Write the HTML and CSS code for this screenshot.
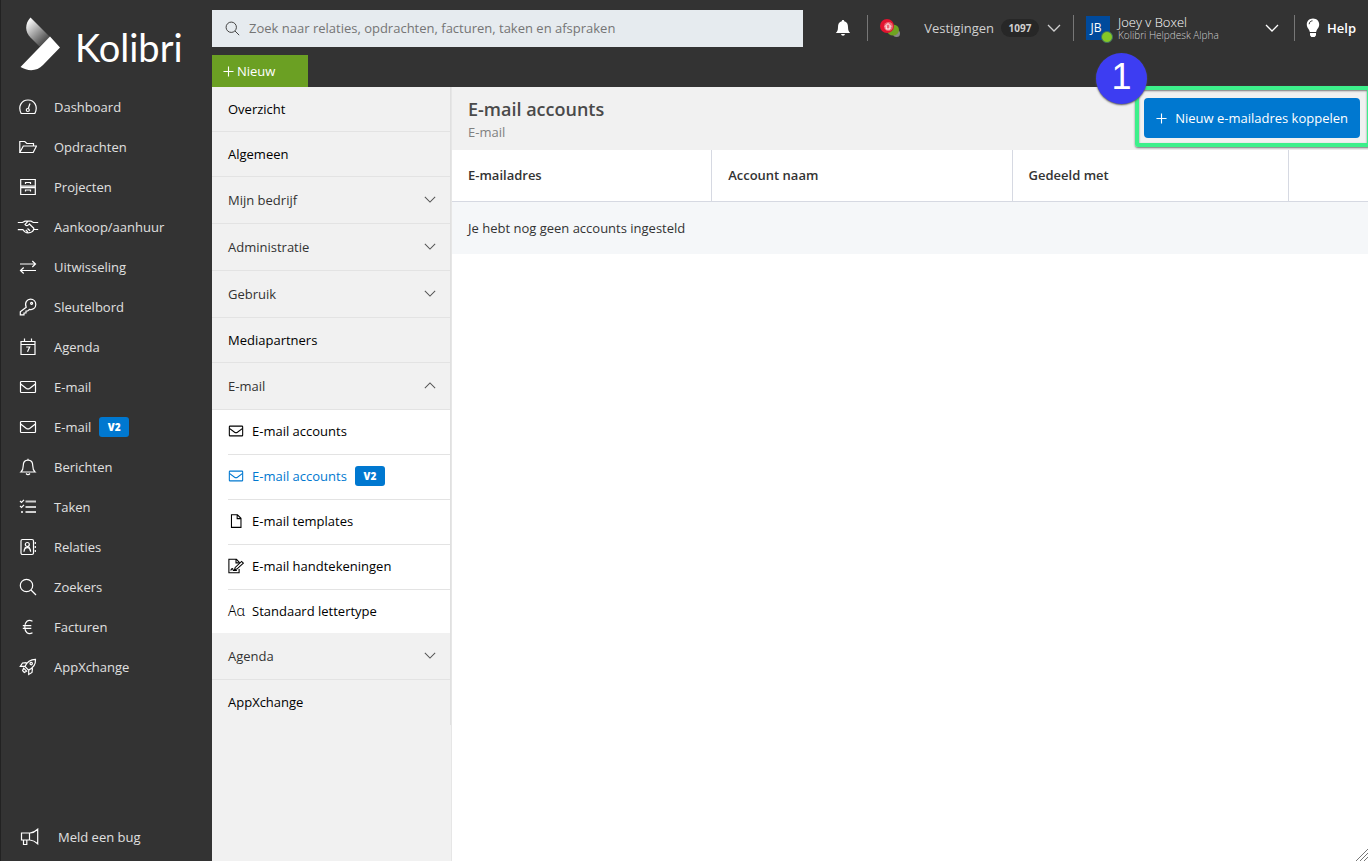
FILE: index.html
```html
<!DOCTYPE html>
<html lang="nl">
<head>
<meta charset="utf-8">
<meta name="viewport" content="width=device-width, initial-scale=1">
<title>Kolibri - E-mail accounts</title>
<link rel="stylesheet" href="styles.css">
</head>
<body>
<svg class="sprite" aria-hidden="true">
  <symbol id="i-mail" viewBox="0 0 18 18"><rect x="1.500" y="3.500" width="15" height="11" rx=".8"/><path d="M1.600 6l5.800 4.400q1.600 1.100 3.200 0L16.400 6"/></symbol>
  <symbol id="i-down" viewBox="0 0 14 8"><path d="M1 1l6 6 6-6"/></symbol>
  <symbol id="i-up" viewBox="0 0 14 8"><path d="M1 7l6-6 6 6"/></symbol>
  <symbol id="i-search" viewBox="0 0 18 18"><circle cx="7.500" cy="7.500" r="6.200"/><path d="M12 12l5 5"/></symbol>
  <symbol id="i-plus" viewBox="0 0 12 12"><path d="M6 .5v11M.5 6h11"/></symbol>
</svg>
<div class="app">
  <aside class="sidebar">
    <a class="brand" href="#">
      <svg class="brand-mark" viewBox="0 0 40 54" aria-hidden="true">
        <defs>
          <linearGradient id="wing" x1="0.100" y1="0" x2="0.800" y2="0.900">
            <stop offset="0.050" stop-color="#fff"/>
            <stop offset="0.900" stop-color="#555"/>
          </linearGradient>
        </defs>
        <path d="M10.500 .5L30 20 19.500 29.500 10.500 20.500C5 15 4.500 7 10.500 .5z" fill="url(#wing)"/>
        <path d="M30 19.500L40 30.500 23 48C17 54.500 8 54.500 .5 50z" fill="#fff"/>
      </svg>
      <span class="brand-name">Kolibri</span>
    </a>
    <nav class="menu" aria-label="Hoofdmenu">
      <a href="#"><svg class="icon" viewBox="0 0 18 18"><path d="M2.200 15.500C-1.400 8.500 2.500 2 9 2s10.400 6.500 6.800 13.500z"/><circle cx="8.800" cy="12" r="1.500"/><path d="M9.300 10.500L11 5.500"/></svg>Dashboard</a>
      <a href="#"><svg class="icon" viewBox="0 0 18 18"><path d="M.8 14.500v-11h5l2 2h6.700V8M.8 14.500L4.300 8h13.200l-3.300 6.500z"/></svg>Opdrachten</a>
      <a href="#"><svg class="icon" viewBox="0 0 18 18"><path d="M1.700 1.500h14.600v15H1.700zM1.700 8.200h14.600M1.700 9.700h14.600M6.500 6V4.500h5V6M6.500 13.500V12h5v1.500"/></svg>Projecten</a>
      <a href="#"><svg class="icon icon-wide" viewBox="0 0 22 18"><path d="M.8 4.500h4.700L8 3.200h3L8 6.500c1 1.800 3 1.200 4.300-.5l4.500 4.300c-.2 3-2.800 4.600-5.800 4.600-2 0-4-1.600-5-3.200H.8M11 3.200h3l2.300 1.300h4.900M16.800 11.500h4.400M10.500 10.500l2.500 2.300M8.800 12l2 2"/></svg>Aankoop/aanhuur</a>
      <a href="#"><svg class="icon" viewBox="0 0 18 18"><path d="M1 6h15.500M13.300 3l3.200 3-3.200 3M17 12.500H1.500M4.700 9.500l-3.200 3 3.200 3"/></svg>Uitwisseling</a>
      <a href="#"><svg class="icon" viewBox="0 0 18 18"><path d="M7.200 9.300C5.200 4.500 8.300 1.200 11.500 1.200c3.500 0 5.300 2.600 5.300 5.300 0 3.600-3 5.700-6.300 4.800L8.700 13H7v2H5v1.800H1.300v-2.900z"/><circle cx="12.600" cy="5.300" r="1"/></svg>Sleutelbord</a>
      <a href="#"><svg class="icon" viewBox="0 0 18 18"><path d="M2 3.500h14v13H2zM2 6.500h14M5.500 3.500v-3M12.500 3.500v-3M7.200 9h3.500L8.500 13.800"/></svg>Agenda</a>
      <a href="#"><svg class="icon"><use href="#i-mail"/></svg>E-mail</a>
      <a href="#"><svg class="icon"><use href="#i-mail"/></svg>E-mail <span class="tag">V2</span></a>
      <a href="#"><svg class="icon" viewBox="0 0 18 18"><path d="M9 2.200V.8M2 14c1.700-1.500 2.200-3 2.200-6C4.200 4.500 6 2.200 9 2.200S13.800 4.500 13.800 8c0 3 .5 4.500 2.200 6zM7 15.500q2 2.200 4 0"/></svg>Berichten</a>
      <a href="#"><svg class="icon" viewBox="0 0 18 18"><path d="M1 3l1.500 1.500L5 1.800M1 8l1.500 1.500L5 6.800"/><path class="bars" d="M6.500 3.500H17M6.500 9H17M6.500 14H17M2 14h2"/></svg>Taken</a>
      <a href="#"><svg class="icon" viewBox="0 0 18 18"><rect x="2" y="1.500" width="12.500" height="15" rx="1.500"/><circle cx="8.300" cy="6.500" r="2"/><path d="M5 13.800c0-5.500 6.600-5.500 6.600 0M6.500 9l-1.500 4M10 9l1.500 4M16.300 4v2M16.300 8v2M16.300 12v2"/></svg>Relaties</a>
      <a href="#"><svg class="icon"><use href="#i-search"/></svg>Zoekers</a>
      <a href="#"><svg class="icon" viewBox="0 0 18 18"><path d="M13.500 3.300C9 .8 5.800 4 5.800 9s3.200 8.200 7.700 5.700M3.800 7.700h8.500M3.800 10.300h8.500"/></svg>Facturen</a>
      <a href="#"><svg class="icon" viewBox="0 0 18 18"><path d="M16.500 1.300c.3 5-1.800 8.500-7 10.800L6 8.500C8 3.500 11.500 1.300 16.500 1.300zM6 8.300H1.300L3.500 5l4-.3M9.700 12v4.500l3.300-2 .5-4.200M4.600 10.200l3 3-2.300 1.200-1.700-1.700z"/><circle cx="12.200" cy="5.600" r="1.200"/></svg>AppXchange</a>
    </nav>
    <a class="report" href="#"><svg class="icon icon-report" viewBox="0 0 20 18"><path d="M2.500 5H11c3-.3 5.500-1.700 7.700-3.800v14.600c-2.200-2-4.700-3.500-7.700-3.800H2.500zM10.500 5v7M4.500 12v4.500h3.300V12"/></svg>Meld een bug</a>
  </aside>

  <div class="workspace">
    <header class="topbar">
      <div class="topbar-row">
        <label class="search">
          <svg class="search-icon" aria-hidden="true"><use href="#i-search"/></svg>
          <input type="search" aria-label="Zoeken" placeholder="Zoek naar relaties, opdrachten, facturen, taken en afspraken">
        </label>
        <div class="tools">
          <button class="tool bell" type="button" aria-label="Meldingen"><svg width="16" height="18" viewBox="0 0 16 18"><path fill="#fff" d="M8 1c.8 0 1.200.5 1.200 1.200C12 3 13 5 13 8c0 3.500.8 4.600 2.200 6H.8C2.200 12.600 3 11.500 3 8c0-3 1-5 3.800-5.800C6.800 1.500 7.200 1 8 1zM6 15h4q-.3 1.800-2 1.800T6 15z"/></svg></button>
          <button class="tool office" type="button">
            <svg class="office-logo" width="20" height="18" viewBox="0 0 20 18" aria-hidden="true"><circle cx="16.500" cy="14.500" r="3.500" fill="#888"/><ellipse cx="13" cy="11" rx="6" ry="5.500" fill="#6fa321"/><circle cx="7" cy="7" r="7" fill="#e2132f"/><circle cx="8.500" cy="7.500" r="4.500" fill="#ed6875"/><path d="M5 7.500L8 4.500l3 3M6.200 7v3h3.800V7" fill="none" stroke="#fff"/></svg>
            <span>Vestigingen</span><span class="count">1097</span>
            <svg class="chevron"><use href="#i-down"/></svg>
          </button>
          <button class="tool user" type="button">
            <span class="avatar">JB<span class="online"></span></span>
            <span class="who"><span class="name">Joey v Boxel</span><span class="org">Kolibri Helpdesk Alpha</span></span>
            <svg class="chevron"><use href="#i-down"/></svg>
          </button>
          <button class="tool help" type="button"><svg width="14" height="20" viewBox="0 0 14 20" aria-hidden="true"><path fill="#fff" d="M7 .5c4 0 6.200 2.800 6.200 6 0 3.500-2.700 4.700-3 7.500H3.800C3.500 11.200.8 10 .8 6.500c0-3.200 2.200-6 6.200-6zM4 15h6v2.200L8.700 19H5.300L4 17.200z"/><path d="M3.200 6.200C3.300 4 4.600 3 6.500 2.800" fill="none" stroke="#333"/></svg>Help</button>
        </div>
      </div>
      <button class="new-button" type="button"><svg class="plus"><use href="#i-plus"/></svg>Nieuw</button>
    </header>

    <div class="content">
      <aside class="settings">
        <nav class="settings-nav" aria-label="Instellingen">
          <a class="row" href="#">Overzicht</a>
          <a class="row" href="#">Algemeen</a>
          <button class="row group" type="button">Mijn bedrijf<svg class="caret"><use href="#i-down"/></svg></button>
          <button class="row group" type="button">Administratie<svg class="caret"><use href="#i-down"/></svg></button>
          <button class="row group" type="button">Gebruik<svg class="caret"><use href="#i-down"/></svg></button>
          <a class="row" href="#">Mediapartners</a>
          <button class="row group" type="button" aria-expanded="true">E-mail<svg class="caret"><use href="#i-up"/></svg></button>
          <div class="subnav">
            <a href="#"><svg class="sub-icon"><use href="#i-mail"/></svg>E-mail accounts</a>
            <a class="active" href="#" aria-current="page"><svg class="sub-icon"><use href="#i-mail"/></svg>E-mail accounts <span class="tag">V2</span></a>
            <a href="#"><svg class="sub-icon" viewBox="0 0 18 18"><path d="M3.900 2h6.700l4 4v10.200H3.900zM10.300 2v4.300h4.300"/></svg>E-mail templates</a>
            <a href="#"><svg class="sub-icon" viewBox="0 0 18 18"><path d="M12.500 12.500v4H1v-15h8.500l3.500 3.700M9 1.500v4h3M17.300 5.800L10 12.500l-2.700.8.800-2.700 7.200-6.800zM3 14c1.500-3 2.300-2.500 3 0h4"/></svg>E-mail handtekeningen</a>
            <a href="#"><span class="letters" aria-hidden="true">Aɑ</span>Standaard lettertype</a>
          </div>
          <button class="row group" type="button">Agenda<svg class="caret"><use href="#i-down"/></svg></button>
          <a class="row last" href="#">AppXchange</a>
        </nav>
      </aside>

      <main class="page">
        <div class="page-head">
          <div>
            <h1>E-mail accounts</h1>
            <p>E-mail</p>
          </div>
          <div class="callout">
            <button class="primary" type="button"><svg class="plus"><use href="#i-plus"/></svg>Nieuw e-mailadres koppelen</button>
            <span class="callout-frame"></span>
            <span class="callout-step">1</span>
          </div>
        </div>
        <table class="accounts">
          <thead>
            <tr><th class="col-mail" scope="col">E-mailadres</th><th class="col-name" scope="col">Account naam</th><th class="col-shared" scope="col">Gedeeld met</th><th aria-label="Acties"></th></tr>
          </thead>
          <tbody>
            <tr><td colspan="4">Je hebt nog geen accounts ingesteld</td></tr>
          </tbody>
        </table>
        <svg class="grip" viewBox="0 0 12 12" aria-hidden="true"><path d="M0 12L12 0M4 12l8-8M8 12l4-4"/></svg>
      </main>
    </div>
  </div>
</div>
</body>
</html>
```
FILE: styles.css
```css
* { box-sizing: border-box; }

body {
  margin: 0;
  font: 13px/18px "Open Sans", "Noto Sans", sans-serif;
  color: #333;
  background: #fff;
}

a { color: inherit; text-decoration: none; }

button {
  font: inherit;
  color: inherit;
  border: 0;
  padding: 0;
  background: none;
  cursor: pointer;
}

svg { flex: none; fill: none; stroke: currentColor; stroke-width: 1.2; }
svg [fill] { stroke-width: 0; }
svg [stroke] { stroke-width: 1; }
.sprite { position: absolute; width: 0; height: 0; }

.app {
  display: grid;
  grid-template-columns: 212px minmax(0, 1fr);
  min-height: 100vh;
  overflow-x: clip;
}

/* Sidebar */
.sidebar {
  display: flex;
  flex-direction: column;
  background: #333;
  border-left: 1px solid #222;
  color: #e0e0e0;
}

.brand {
  display: flex;
  gap: 15px;
  height: 87px;
  padding: 17px 0 0 19px;
  color: #fff;
}

.brand-mark { width: 40px; height: 54px; }
.brand-name { font: 38px/60px Lato, "Open Sans", sans-serif; }

.menu { display: flex; flex-direction: column; flex: 1; }

.menu a,
.report {
  display: flex;
  align-items: center;
  height: 40px;
  padding-left: 18px;
}

.icon { width: 18px; height: 18px; margin-right: 17px; color: #fff; }
.icon-wide { width: 22px; margin: 0 15px 0 -2px; }
.icon-report { width: 20px; margin-right: 19px; }
.bars { stroke-width: 2; stroke: #d0d0d0; }

.report { margin-bottom: 4px; }

.tag {
  margin-left: 8px;
  width: 30px;
  border-radius: 3px;
  background: #0078d0;
  color: #fff;
  font-size: 10px;
  font-weight: 800;
  line-height: 20px;
  text-align: center;
}

/* Top bar */
.workspace { display: flex; flex-direction: column; min-width: 0; }

.topbar {
  height: 87px;
  padding-top: 10px;
  background: #333;
  color: #fff;
}

.topbar-row { display: flex; height: 37px; margin-bottom: 8px; }

.search {
  display: flex;
  align-items: center;
  flex: 1;
  min-width: 0;
  gap: 9px;
  padding: 0 0 1px 13px;
  background: #e6ebef;
}

.search-icon { width: 15px; height: 15px; color: #444; }

.search input {
  flex: 1;
  min-width: 0;
  border: 0;
  padding: 0;
  outline: 0;
  background: none;
  font: inherit;
}

.search input::placeholder { color: #757575; opacity: 1; }

.tools { display: flex; align-items: center; padding: 0 12px 1px 32px; }
.tool { display: flex; align-items: center; height: 26px; }
.tool + .tool { border-left: 1px solid #777; }

.bell { padding-right: 16px; }
.office { padding: 0 12px; color: #d0d0d0; }
.office-logo { margin-right: 24px; }

.count {
  margin: 0 8px 0 7px;
  width: 38px;
  border-radius: 9px;
  background: #272727;
  font-size: 10px;
  font-weight: 700;
  text-align: center;
}

.chevron { width: 14px; height: 8px; stroke-width: 1.3; }

.user { padding: 0 15px 0 12px; }

.avatar {
  position: relative;
  width: 24px;
  margin-right: 8px;
  padding-right: 4px;
  background: #004a9c;
  font-size: 12px;
  line-height: 24px;
}

.online {
  position: absolute;
  right: -3px;
  bottom: -3px;
  width: 12px;
  height: 12px;
  border: 1px solid #3f6f63;
  border-radius: 50%;
  background: #84c827;
}

.who { display: grid; width: 147px; text-align: left; font-weight: 300; }
.name { line-height: 14px; }
.org { font-size: 10px; line-height: 12px; color: #d0d0d0; }

.help { padding-left: 11px; gap: 7px; font-weight: 600; }

.new-button {
  display: flex;
  align-items: center;
  gap: 3px;
  width: 96px;
  height: 32px;
  padding-left: 11px;
  background: #6ba023;
}

.plus { width: 11px; height: 11px; }

/* Settings navigation */
.content { display: flex; flex: 1; }

.settings {
  flex: none;
  width: 240px;
  border-right: 1px solid #e6e6e6;
  background: #f1f1f1;
}

.settings-nav { display: flex; flex-direction: column; border-right: 1px solid #e0e0e0; }

.row {
  display: flex;
  align-items: center;
  height: 45px;
  padding: 0 14px 0 16px;
  border-bottom: 1px solid #e3e3e3;
  color: #000;
}

.row.group { justify-content: space-between; height: 47px; padding-bottom: 1px; color: #333; }
.row.last { border-bottom: 0; padding-bottom: 2px; }
.caret { width: 12px; height: 7px; color: #555; }

.subnav { padding-left: 16px; background: #fff; }

.subnav a {
  display: flex;
  align-items: center;
  height: 45px;
  padding-bottom: 2px;
  border-bottom: 1px solid #e3e3e3;
  color: #000;
}

.subnav a:last-child { height: 43px; border-bottom: 0; }
.subnav .active { color: #0078d0; }
.sub-icon { width: 16px; height: 16px; margin-right: 8px; }
.letters { width: 24px; font-family: "Noto Sans", sans-serif; font-size: 14px; font-weight: 300; }

/* Page */
.page { position: relative; flex: 1; min-width: 0; }

.page-head {
  display: flex;
  align-items: flex-start;
  justify-content: space-between;
  height: 63px;
  padding: 11px 8px 0 16px;
  background: #f1f1f1;
}

.page-head h1 { margin: 0; font-size: 18px; font-weight: 600; line-height: 22px; color: #4a4a4a; }
.page-head p { margin: 3px 0 0; color: #808080; }

.callout { position: relative; }

.primary {
  display: flex;
  align-items: center;
  gap: 8px;
  height: 40px;
  padding: 0 12px;
  border-radius: 4px;
  background: #0078d0;
  color: #fff;
}

.callout-frame {
  position: absolute;
  inset: -12px -11px -9px -9px;
  border: 4px solid #3df08b;
  border-radius: 3px;
  box-shadow: 0 1px 2px #777, inset 0 1px 2px #777;
  pointer-events: none;
}

.callout-step {
  position: absolute;
  top: -45px;
  left: -48px;
  width: 51px;
  height: 51px;
  border-radius: 50%;
  background: #3d3df2;
  box-shadow: 0 1px 2px #555;
  color: #fff;
  font: 36px/48px "Liberation Sans", Arial, sans-serif;
  text-align: center;
}

.accounts { width: 100%; border-collapse: separate; border-spacing: 0; table-layout: fixed; }

.accounts th,
.accounts td { height: 52px; padding: 0 16px; text-align: left; }

.accounts th { padding-bottom: 1px; border-bottom: 1px solid #d6d9e2; border-right: 1px solid #d6d9e2; font-weight: 600; }
.accounts th:last-child { border-right: 0; }
.accounts td { background: #f5f7f9; }

.col-mail { width: 28.4%; }
.col-name { width: 32.8%; }
.col-shared { width: 30.2%; }

.grip { position: absolute; right: 0; bottom: 0; width: 12px; height: 12px; color: #777; stroke-width: 1; }
```
